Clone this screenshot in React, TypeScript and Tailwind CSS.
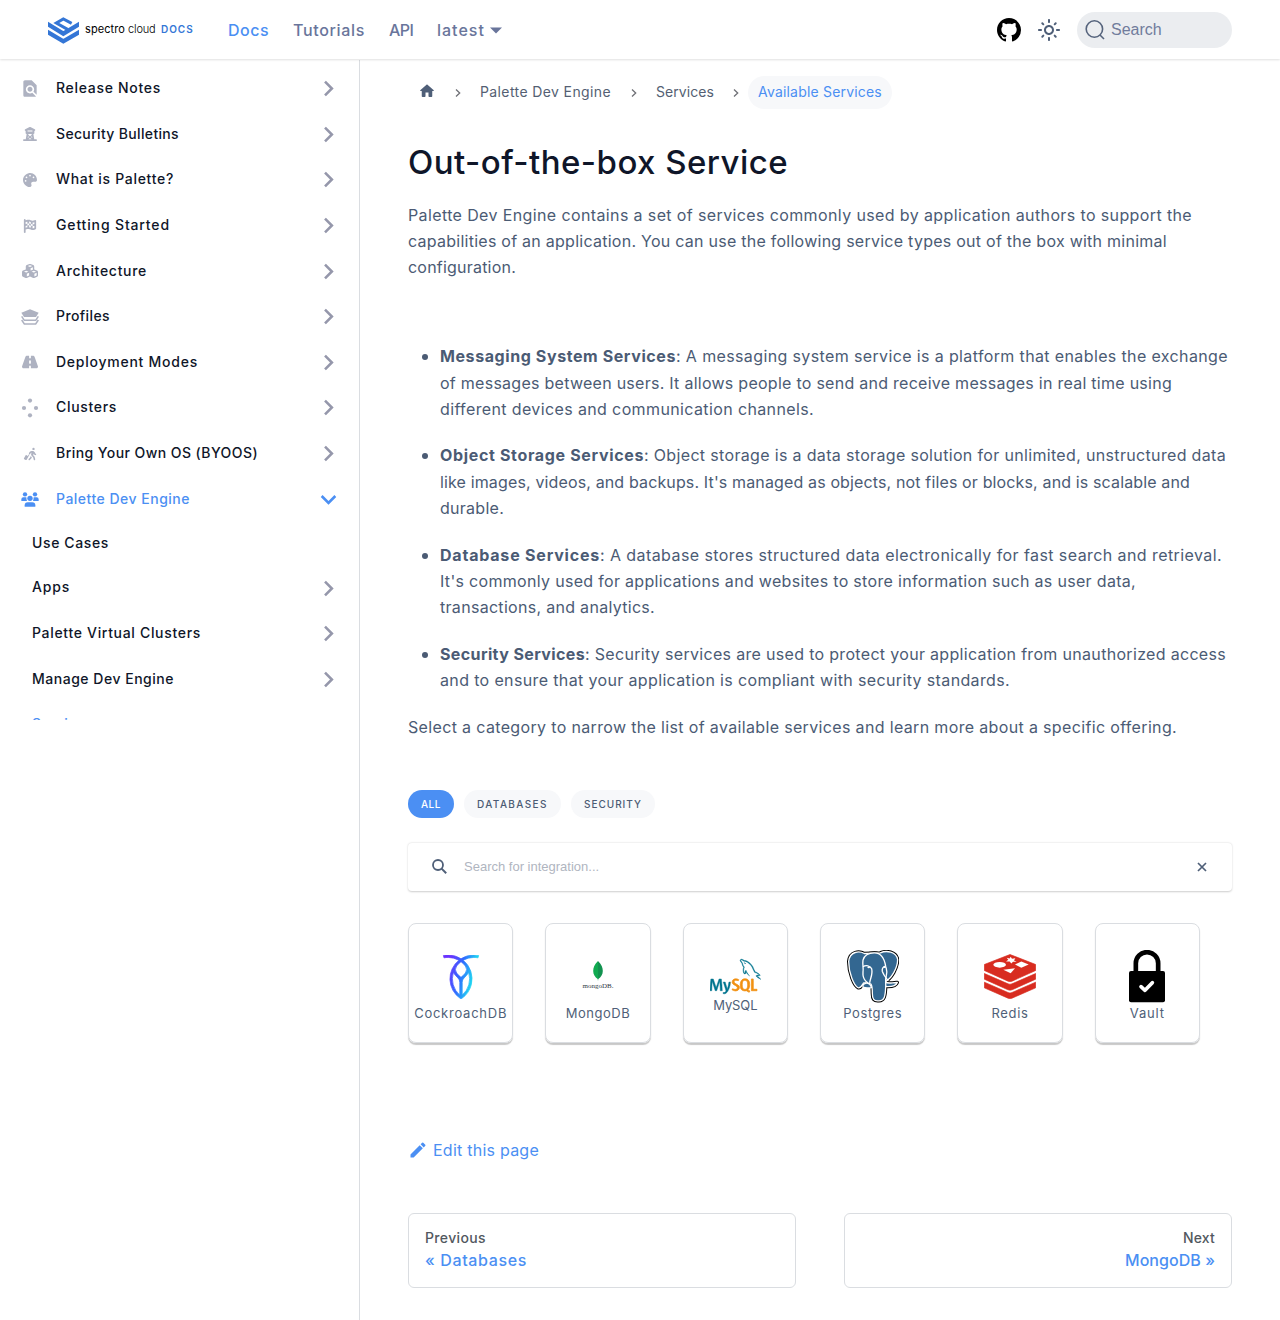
import React from "react";
import type { ReactNode } from "react";
import { FaTowerObservation, FaFlagCheckered, FaCubes, FaRoad, FaPersonWalkingLuggage } from "react-icons/fa6";
import { FaPalette } from "react-icons/fa";
import { MdFindInPage, MdOutlineLightMode } from "react-icons/md";
import { SiCockroachlabs, SiMysql } from "react-icons/si";
import { BsGithub } from "react-icons/bs";

function SpectroMark() {
  return (
    <svg width="31" height="27" viewBox="0 0 93 81" className="mr-px shrink-0" fill="none" stroke="#3476d6">
      <path d="M71 19 L46 6 L25 18 L60 38" strokeWidth="9" />
      <path d="M-6 18 L46 50 L99 18" strokeWidth="13" />
      <path d="M-6 42 L46 73 L99 42" strokeWidth="13" />
    </svg>
  );
}

function StackIcon() {
  return (
    <svg width="18" height="16" viewBox="0 0 54 48">
      <path d="M1 11 L27 1 L53 11 L45 24 H9Z" fill="currentColor" />
      <path d="M2 22 L10 34 H44 L52 22 M2 33 L10 45 H44 L52 33" fill="none" stroke="currentColor" strokeWidth="4.5" />
    </svg>
  );
}

function DotsIcon() {
  return (
    <svg width="18" height="20" viewBox="0 0 18 20" fill="currentColor">
      <circle cx="9" cy="2.6" r="2.1" />
      <circle cx="3" cy="10" r="2.1" />
      <circle cx="15" cy="10" r="2.1" />
      <circle cx="9" cy="17.3" r="2.1" />
    </svg>
  );
}

function TeamIcon() {
  return (
    <svg width="18" height="15" viewBox="0 0 54 45" fill="currentColor">
      <circle cx="12" cy="7" r="6.5" />
      <circle cx="42" cy="7" r="6.5" />
      <circle cx="27" cy="19" r="8" />
      <path d="M1 27 V22 Q1 16 7 16 H16 Q16 22 18 27Z" />
      <path d="M53 27 V22 Q53 16 47 16 H38 Q38 22 36 27Z" />
      <path d="M11 44 V40 Q11 31 20 31 H34 Q43 31 43 40 V44Z" />
    </svg>
  );
}

function Caret({ open }: { open?: boolean }) {
  return (
    <svg
      width="31"
      height="31"
      viewBox="0 0 24 24"
      className={open ? "rotate-180 text-[#4b8ff3]" : "rotate-90 text-[#9597ab]"}
    >
      <path fill="currentColor" d="M7.41 15.41L12 10.83l4.59 4.58L18 14l-6-6-6 6z" />
    </svg>
  );
}

type Item = { label: string; track: string; icon: ReactNode; open?: boolean };

const topItems: Item[] = [
  { label: "Release Notes", track: "tracking-[0.7px]", icon: <MdFindInPage size={21} /> },
  { label: "Security Bulletins", track: "tracking-[0.34px]", icon: <FaTowerObservation size={14} /> },
  { label: "What is Palette?", track: "tracking-[0.69px]", icon: <FaPalette size={14} /> },
  { label: "Getting Started", track: "tracking-[0.85px]", icon: <FaFlagCheckered size={14} /> },
  { label: "Architecture", track: "tracking-[0.7px]", icon: <FaCubes size={16} /> },
  { label: "Profiles", track: "tracking-[0.4px]", icon: <StackIcon /> },
  { label: "Deployment Modes", track: "tracking-[0.75px]", icon: <FaRoad size={16} /> },
  { label: "Clusters", track: "tracking-[0.68px]", icon: <DotsIcon /> },
  { label: "Bring Your Own OS (BYOOS)", track: "tracking-[0.44px]", icon: <FaPersonWalkingLuggage size={14} /> },
  { label: "Palette Dev Engine", track: "tracking-[0.49px]", icon: <TeamIcon />, open: true },
];

const subItems = [
  { label: "Apps", track: "tracking-[0.8px]" },
  { label: "Palette Virtual Clusters", track: "tracking-[0.68px]" },
  { label: "Manage Dev Engine", track: "tracking-[0.51px]" },
];

function Sidebar() {
  return (
    <aside className="w-[360px] shrink-0 border-r border-[#dadde1]">
      <nav className="h-[660px] overflow-hidden pt-[6px] text-sm font-medium text-[#0f1629]">
        {topItems.map((it) => (
          <div key={it.label} className="flex h-[45.6px] items-center pl-5 pr-[15.500px]">
            <span className={`flex w-5 items-center justify-center ${it.open ? "text-[#4b8ff3]" : "text-[#aeb2c1]"}`}>
              {it.icon}
            </span>
            <span className={`ml-4 grow whitespace-nowrap pb-[1px] ${it.track} ${it.open ? "text-[#4b8ff3]" : ""}`}>
              {it.label}
            </span>
            <Caret open={it.open} />
          </div>
        ))}
        <div className="flex h-[43.6px] items-center pl-8 pb-[1px] tracking-[0.62px]">Use Cases</div>
        {subItems.map((it) => (
          <div key={it.label} className="flex h-[45.6px] items-center pl-8 pr-[15.500px]">
            <span className={`grow whitespace-nowrap pb-[2px] ${it.track}`}>{it.label}</span>
            <Caret />
          </div>
        ))}
        <div className="flex h-[45.6px] items-center pl-8 pb-[2px] tracking-[0.3px] text-[#4b8ff3]">Services</div>
      </nav>
    </aside>
  );
}

function Header() {
  return (
    <header className="relative z-10 mb-px flex h-[59px] items-center bg-white px-12 pt-px shadow-[0_1px_2px_0_rgba(0,0,0,0.12)]">
      <div className="flex w-[180px] items-center">
        <SpectroMark />
        <div className="ml-[5px] flex items-baseline pb-[3px] text-[11px] leading-4 text-black">
          <span className="w-[43px] tracking-[0.09px]">spectro</span>
          <span className="w-[33px] font-light tracking-[-0.15px]">cloud</span>
          <span className="text-[10px] font-semibold tracking-[0.95px] text-[#3476d6]">DOCS</span>
        </div>
      </div>
      <nav className="flex items-center font-medium text-[#69759b]">
        <span className="w-[65px] tracking-[0.48px] text-[#4b8ff3]">Docs</span>
        <span className="w-24 tracking-[0.67px]">Tutorials</span>
        <span className="w-12 tracking-[-0.5px]">API</span>
        <span className="w-[53px] tracking-[1px]">latest</span>
        <svg width="12" height="7" viewBox="0 0 12 7" className="mt-px">
          <path d="M0 0.4H12L6 6.6Z" fill="currentColor" />
        </svg>
      </nav>
      <div className="ml-auto flex items-center">
        <BsGithub size={24} color="#000" />
        <MdOutlineLightMode size={24} className="ml-4 text-[#4f5f78]" />
        <div className="ml-4 flex h-9 w-[155px] items-center rounded-full bg-[#ebedf0] pl-2 font-['Liberation_Sans',sans-serif] text-[#717c9c]">
          <svg width="20" height="20" viewBox="0 0 20 20" fill="none" stroke="#55637c" strokeWidth="1.6">
            <circle cx="9.4" cy="9" r="8.2" />
            <path d="M15 15L19 19" />
          </svg>
          <span className="ml-[6px]">Search</span>
        </div>
      </div>
    </header>
  );
}

function Sep() {
  return (
    <svg width="8" height="10" viewBox="0 0 8 10" className="mt-px shrink-0">
      <path d="M2 1.500L5.700 5L2 8.500" fill="none" stroke="#6f7076" strokeWidth="1.3" />
    </svg>
  );
}

function Crumbs() {
  return (
    <div className="flex h-[33px] items-center whitespace-nowrap text-sm text-[#545f73]">
      <svg width="18" height="18" viewBox="0 0 24 24" className="mb-[3px] ml-[10px] mr-[18px]">
        <path
          d="M10 19v-5h4v5c0 .55.45 1 1 1h3c.55 0 1-.45 1-1v-7h1.7c.46 0 .68-.57.33-.87L12.67 3.6c-.38-.34-.96-.34-1.34 0l-8.36 7.53c-.34.3-.13.87.33.87H5v7c0 .55.45 1 1 1h3c.55 0 1-.45 1-1z"
          fill="#4f5f78"
        />
      </svg>
      <Sep />
      <span className="ml-[18px] mr-[19px] w-[131px] pb-px tracking-[0.39px]">Palette Dev Engine</span>
      <Sep />
      <span className="ml-[18px] mr-[18px] w-[58px] pb-px tracking-[0.07px]">Services</span>
      <Sep />
      <span className="ml-2 flex h-[33px] w-36 items-center rounded-full bg-[#f7f8fa] pb-px pl-[10px] tracking-[0.19px] text-[#4b8ff3]">
        Available Services
      </span>
    </div>
  );
}

function Line({ track, children }: { track: string; children: ReactNode }) {
  return <span className={`block whitespace-nowrap ${track}`}>{children}</span>;
}

function Bullet({ children }: { children: ReactNode }) {
  return (
    <li className="mb-5 flex">
      <span className="ml-[14px] mr-3 mt-[11px] size-[6px] shrink-0 rounded-full bg-[#4b5b74]" />
      <div>{children}</div>
    </li>
  );
}

function Body() {
  return (
    <div className="text-base leading-[26.4px] text-[#4b5b74]">
      <p>
        <Line track="tracking-[0.378px]">
          Palette Dev Engine contains a set of services commonly used by application authors to support the
        </Line>
        <Line track="tracking-[0.255px]">
          capabilities of an application. You can use the following service types out of the box with minimal
        </Line>
        <Line track="tracking-[0.212px]">configuration.</Line>
      </p>
      <ul className="mt-[62.5px]">
        <Bullet>
          <Line track="tracking-[0.37px]">
            <b className="tracking-[0.59px]">Messaging System Services</b>: A messaging system service is a platform that
            enables the exchange
          </Line>
          <Line track="tracking-[0.266px]">
            of messages between users. It allows people to send and receive messages in real time using
          </Line>
          <Line track="tracking-[0.376px]">different devices and communication channels.</Line>
        </Bullet>
        <Bullet>
          <Line track="tracking-[0.336px]">
            <b className="tracking-[0.654px]">Object Storage Services</b>: Object storage is a data storage solution for
            unlimited, unstructured data
          </Line>
          <Line track="tracking-[0.139px]">
            like images, videos, and backups. It's managed as objects, not files or blocks, and is scalable and
          </Line>
          <Line track="tracking-[0.266px]">durable.</Line>
        </Bullet>
        <Bullet>
          <Line track="tracking-[0.42px]">
            <b className="tracking-[0.795px]">Database Services</b>: A database stores structured data electronically for
            fast search and retrieval.
          </Line>
          <Line track="tracking-[0.313px]">
            It's commonly used for applications and websites to store information such as user data,
          </Line>
          <Line track="tracking-[0.299px]">transactions, and analytics.</Line>
        </Bullet>
        <Bullet>
          <Line track="tracking-[0.317px]">
            <b className="tracking-[0.377px]">Security Services</b>: Security services are used to protect your application
            from unauthorized access
          </Line>
          <Line track="tracking-[0.36px]">
            and to ensure that your application is compliant with security standards.
          </Line>
        </Bullet>
      </ul>
      <p>
        <Line track="tracking-[0.345px]">
          Select a category to narrow the list of available services and learn more about a specific offering.
        </Line>
      </p>
    </div>
  );
}

function CockroachLogo() {
  return (
    <div className="flex h-[53px] items-center justify-center">
      <svg width="0" height="0">
        <defs>
          <linearGradient id="roach" x1="0" y1="0.2" x2="1" y2="0.5">
            <stop offset="0.15" stopColor="#6933ff" />
            <stop offset="0.5" stopColor="#2f6bff" />
            <stop offset="0.85" stopColor="#1fd5f2" />
          </linearGradient>
        </defs>
      </svg>
      <SiCockroachlabs size={44} className="fill-[url(#roach)] stroke-[url(#roach)]" strokeWidth="0.4" />
    </div>
  );
}

function MongoLogo() {
  return (
    <div className="flex h-[53px] flex-col items-center pt-[11px]">
      <svg width="10" height="20" viewBox="0 0 10 20">
        <path d="M5 0C1.5 3.5 .2 6.5 .2 10C.2 13.5 2 16 4.7 18L5 20Z" fill="#10aa50" />
        <path d="M5 0C8.5 3.5 9.8 6.5 9.8 10C9.8 13.5 8 16 5.3 18L5 20Z" fill="#12924f" />
      </svg>
      <span className="mt-[1px] font-['Liberation_Serif',serif] text-[7px] leading-[8px] text-[#30393f]">
        mongoDB.
      </span>
    </div>
  );
}

function MysqlLogo() {
  return (
    <div className="relative flex h-[36px] items-center justify-center">
      <SiMysql
        size={51}
        className="text-[#00758f] [clip-path:polygon(0_0,100%_0,100%_58%,86%_58%,86%_50%,41%_50%,41%_100%,0_100%)]"
        stroke="#00758f"
        strokeWidth="0.2"
      />
      <SiMysql
        size={51}
        className="absolute text-[#f29111] [clip-path:polygon(41%_50%,86%_50%,86%_58%,100%_58%,100%_100%,41%_100%)]"
        stroke="#f29111"
        strokeWidth="0.35"
      />
    </div>
  );
}

function PostgresLogo() {
  const ears =
    "M52 10C38 2 8 2 5 34C5 66 20 108 34 113C42 115 46 104 50 98L110 96C135 88 152 50 152 28C148 4 118 0 100 8Z";
  const trunk =
    "M48 30C52 14 64 8 82 8C100 8 112 24 116 48C118 58 122 60 118 76C114 90 117 96 116 112C115 138 112 152 96 152C80 154 76 146 76 130C76 120 76 108 72 102C62 100 46 90 48 66C50 52 46 44 48 30Z";
  const tusk = "M114 96C128 102 136 96 151 97C148 106 132 110 116 109Z";
  const leftTusk = "M48 104C54 98 62 98 68 102L74 112C64 116 56 112 48 111Z";
  return (
    <svg width="52" height="53" viewBox="0 0 156 158">
      <g fill="#000" stroke="#000" strokeWidth="10" strokeLinejoin="round">
        <path d={ears} />
        <path d={trunk} />
        <path d={tusk} />
      </g>
      <g fill="#336791" stroke="#fff" strokeWidth="4" strokeLinejoin="round">
        <path d={ears} />
        <path d={leftTusk} />
        <path d={tusk} />
        <path d={trunk} />
        <path d="M48 50C56 44 70 46 74 56C78 72 70 84 68 98" fill="none" />
        <path d="M116 48C108 50 104 54 106 64C110 76 118 84 124 92" fill="none" />
      </g>
      <ellipse cx="65" cy="52" rx="4" ry="2.5" fill="#fff" />
      <ellipse cx="113" cy="51" rx="3.5" ry="2.5" fill="#fff" />
    </svg>
  );
}

function RedisLogo() {
  return (
    <div className="flex h-[53px] items-center justify-center">
      <svg width="52" height="45" viewBox="0 0 156 134">
        <g fill="#d82c20" stroke="#d82c20" strokeWidth="2" strokeLinejoin="round">
          <path d="M78 1L155 31V49L84 81Q78 83 72 81L1 49V31Z" />
          <path d="M1 58L72 89Q78 92 84 89L155 58V75L84 107Q78 109 72 107L1 75Z" />
          <path d="M1 84L72 115Q78 118 84 115L155 84V101L84 132Q78 134 72 132L1 101Z" />
        </g>
        <g fill="#fff">
          <ellipse cx="47" cy="32" rx="19" ry="8.5" />
          <path d="M80 8L84 14L94 12L90 19L98 23L87 23L82 28L77 22L66 22L73 17L68 11L77 13Z" />
          <path d="M93 31L112 22L134 31L112 41Z" />
          <path d="M58 47L93 42L80 57Z" />
        </g>
      </svg>
    </div>
  );
}

function LockLogo() {
  return (
    <svg width="36" height="53" viewBox="0 0 108 159">
      <path d="M20.5 70V40A33.5 33.5 0 0 1 87.5 40V70" fill="none" stroke="#000" strokeWidth="14" />
      <rect x="0" y="63" width="108" height="94" rx="6" />
      <path d="M36 110L48 121L70 98" fill="none" stroke="#fff" strokeWidth="11" strokeLinecap="round" strokeLinejoin="round" />
    </svg>
  );
}

const cards = [
  { label: "CockroachDB", track: "tracking-[0.75px]", logo: <CockroachLogo /> },
  { label: "MongoDB", track: "tracking-[0.52px]", logo: <MongoLogo /> },
  { label: "MySQL", track: "tracking-[-0.1px]", logo: <MysqlLogo /> },
  { label: "Postgres", track: "tracking-[0.61px]", logo: <PostgresLogo /> },
  { label: "Redis", track: "tracking-[0.65px]", logo: <RedisLogo /> },
  { label: "Vault", track: "tracking-[0.82px]", logo: <LockLogo /> },
];

function Integrations() {
  return (
    <>
      <div className="mt-[49.5px] flex h-7 gap-[10px] text-[10px] font-medium text-[#4b5b74]">
        <span className="flex w-[46px] items-center rounded-full bg-[#4b8ff3] pl-[13px] pt-px tracking-[0.45px] text-white">
          ALL
        </span>
        <span className="flex w-[97px] items-center rounded-full bg-[#f7f8fa] pl-[13px] pt-px tracking-[1.38px]">
          DATABASES
        </span>
        <span className="flex w-[84px] items-center rounded-full bg-[#f7f8fa] pl-[13px] pt-px tracking-[0.98px]">
          SECURITY
        </span>
      </div>
      <div className="mt-[25px] flex h-12 items-center rounded px-6 shadow-[0_0.5px_2px_rgba(0,0,0,0.2)]">
        <svg width="15" height="15" viewBox="0 0 15 15" fill="none" stroke="#4f5f78">
          <circle cx="6" cy="6" r="5" strokeWidth="1.8" />
          <path d="M9.6 9.6L14.2 14.2" strokeWidth="2" />
        </svg>
        <span className="ml-[17px] grow pt-px font-['Liberation_Sans',sans-serif] text-[13px] text-[#b0b5bf]">
          Search for integration...
        </span>
        <svg width="10" height="10" viewBox="0 0 10 10" className="mr-[1px]">
          <path d="M1 1L9 9M9 1L1 9" stroke="#4f5f78" strokeWidth="1.7" />
        </svg>
      </div>
      <div className="mt-8 grid grid-cols-6">
        {cards.map((c) => (
          <div key={c.label} className="pr-8">
            <div className="flex h-[120px] flex-col items-center justify-center rounded-lg border border-[#dadde1] pt-[9px] shadow-[0_2px_1px_rgba(0,0,0,0.22)]">
              {c.logo}
              <span className={`whitespace-nowrap text-[13px] leading-[21px] text-[#4f5f78] ${c.track}`}>{c.label}</span>
            </div>
          </div>
        ))}
      </div>
    </>
  );
}

export default function App() {
  return (
    <div className="flex h-[1320px] w-[1280px] flex-col overflow-hidden bg-white font-['Inter',sans-serif]">
      <Header />
      <div className="flex grow">
        <Sidebar />
        <main className="w-[920px] px-12 pt-4">
          <Crumbs />
          <h1 className="mt-[32px] whitespace-nowrap text-[33px] font-medium leading-[42px] tracking-[0.448px] text-[#0f1629]">
            Out-of-the-box Service
          </h1>
          <div className="mt-[18.5px]">
            <Body />
          </div>
          <Integrations />
          <div className="mt-[93px] flex h-7 items-center text-[#4b8ff3]">
            <svg width="20" height="20" viewBox="0 0 40 40" fill="currentColor" className="mt-px">
              <path d="m34.5 11.7l-3 3.1-6.3-6.3 3.1-3q0.5-0.5 1.2-0.5t1.1 0.5l3.9 3.9q0.5 0.4 0.5 1.1t-0.5 1.2z m-29.5 17.1l18.4-18.5 6.3 6.3-18.4 18.4h-6.3v-6.2z" />
            </svg>
            <span className="ml-[5px] tracking-[0.24px]">Edit this page</span>
          </div>
          <div className="mt-[49px] grid grid-cols-2 gap-12 font-medium">
            <div className="h-[75px] rounded-md border border-[#dadde1] px-4 pt-[14px]">
              <div className="text-sm leading-5 tracking-[0.365px] text-[#525860]">Previous</div>
              <div className="leading-6 tracking-[0.636px] text-[#4b8ff3]">« Databases</div>
            </div>
            <div className="h-[75px] rounded-md border border-[#dadde1] px-4 pt-[14px] text-right">
              <div className="text-sm leading-5 tracking-[0.169px] text-[#525860]">Next</div>
              <div className="leading-6 tracking-[0.053px] text-[#4b8ff3]">MongoDB »</div>
            </div>
          </div>
        </main>
      </div>
    </div>
  );
}
